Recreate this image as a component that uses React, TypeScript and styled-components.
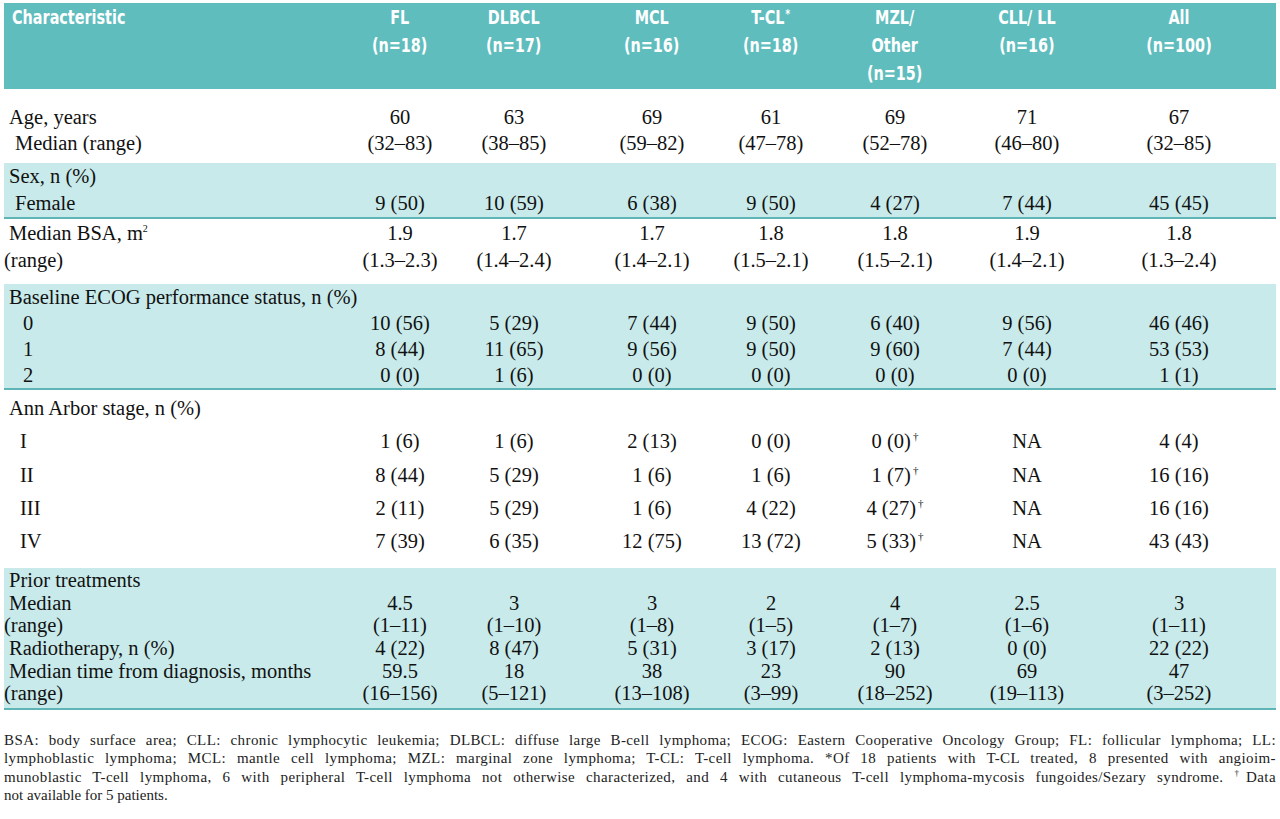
import React from 'react';
import styled, { createGlobalStyle } from 'styled-components';

// Baseline characteristics table (teal header, alternating shaded blocks)

const GlobalStyle = createGlobalStyle`
  html, body {
    margin: 0;
    padding: 0;
    background: #fff;
  }
`;

const COLS = '348px 96px 132px 144px 94px 154px 110px 1fr';

const Page = styled.div`
  width: 1272px;
  padding: 3px 4px 0;
  font-family: 'Liberation Serif', 'Times New Roman', serif;
  color: #111;
`;

const Head = styled.div`
  display: grid;
  grid-template-columns: ${COLS};
  height: 86px;
  background: #5fbdbe;
  color: #fff;
  font-family: 'Liberation Sans Narrow', 'DejaVu Sans Condensed', sans-serif;
  font-stretch: condensed;
  font-weight: bold;
  font-size: 20px;
  line-height: 28px;
`;

const HeadCell = styled.div<{ $left?: boolean }>`
  text-align: ${(p) => (p.$left ? 'left' : 'center')};
  padding-left: ${(p) => (p.$left ? '8px' : '0')};
`;

// the source face is a heavy condensed grotesque; squeeze the bold condensed sans to match
const HeadText = styled.span<{ $left?: boolean }>`
  display: inline-block;
  transform: scaleX(0.8);
  transform-origin: ${(p) => (p.$left ? 'left' : 'center')} top;
`;

const Star = styled.sup`
  font-size: 13px;
  line-height: 0;
  vertical-align: 6px;
  margin-left: 1px;
`;

const Section = styled.div<{ $shaded?: boolean; $lh: number; $pt: number; $pb: number }>`
  background: ${(p) => (p.$shaded ? '#c8eaea' : '#fff')};
  border-bottom: ${(p) => (p.$shaded ? '2px solid #5fb5b6' : 'none')};
  padding: ${(p) => p.$pt}px 0 ${(p) => p.$pb}px;
  line-height: ${(p) => p.$lh}px;
  font-size: 20.5px;
`;

const Line = styled.div`
  display: grid;
  grid-template-columns: ${COLS};
  white-space: nowrap;
`;

const Label = styled.div<{ $indent: number }>`
  padding-left: ${(p) => 5 + p.$indent}px;
`;

const Value = styled.div`
  text-align: center;
`;

const Sup = styled.sup`
  font-size: 11px;
  line-height: 0;
  vertical-align: 8px;
  margin-left: 2px;
`;

const Squared = styled.sup`
  font-size: 10px;
  line-height: 0;
  vertical-align: 8px;
`;

const Notes = styled.div`
  margin-top: 21px;
  font-size: 15px;
  line-height: 18.5px;
  color: #222;
`;

const NoteLine = styled.div<{ $last?: boolean }>`
  text-align: ${(p) => (p.$last ? 'left' : 'justify')};
  text-align-last: ${(p) => (p.$last ? 'left' : 'justify')};
  letter-spacing: ${(p) => (p.$last ? '0' : '0.4px')};
`;

const NoteSup = styled.sup`
  font-size: 9px;
  line-height: 0;
  vertical-align: 6px;
`;

type Row = { label: React.ReactNode; indent?: number; values?: string[] };
type Block = { shaded?: boolean; lh: number; pt: number; pb: number; rows: Row[] };

const blocks: Block[] = [
  {
    lh: 26,
    pt: 15,
    pb: 7,
    rows: [
      { label: 'Age, years', values: ['60', '63', '69', '61', '69', '71', '67'] },
      {
        label: 'Median (range)',
        indent: 6,
        values: ['(32–83)', '(38–85)', '(59–82)', '(47–78)', '(52–78)', '(46–80)', '(32–85)'],
      },
    ],
  },
  {
    shaded: true,
    lh: 27,
    pt: 0,
    pb: 0,
    rows: [
      { label: 'Sex, n (%)' },
      {
        label: 'Female',
        indent: 6,
        values: ['9 (50)', '10 (59)', '6 (38)', '9 (50)', '4 (27)', '7 (44)', '45 (45)'],
      },
    ],
  },
  {
    lh: 27,
    pt: 1,
    pb: 10,
    rows: [
      {
        label: (
          <>
            Median BSA, m<Squared>2</Squared>
          </>
        ),
        values: ['1.9', '1.7', '1.7', '1.8', '1.8', '1.9', '1.8'],
      },
      {
        label: '(range)',
        indent: -5,
        values: ['(1.3–2.3)', '(1.4–2.4)', '(1.4–2.1)', '(1.5–2.1)', '(1.5–2.1)', '(1.4–2.1)', '(1.3–2.4)'],
      },
    ],
  },
  {
    shaded: true,
    lh: 26,
    pt: 0,
    pb: 0,
    rows: [
      { label: 'Baseline ECOG performance status, n (%)' },
      { label: '0', indent: 14, values: ['10 (56)', '5 (29)', '7 (44)', '9 (50)', '6 (40)', '9 (56)', '46 (46)'] },
      { label: '1', indent: 14, values: ['8 (44)', '11 (65)', '9 (56)', '9 (50)', '9 (60)', '7 (44)', '53 (53)'] },
      { label: '2', indent: 14, values: ['0 (0)', '1 (6)', '0 (0)', '0 (0)', '0 (0)', '0 (0)', '1 (1)'] },
    ],
  },
  {
    lh: 33.25,
    pt: 2,
    pb: 10,
    rows: [
      { label: 'Ann Arbor stage, n (%)' },
      { label: 'I', indent: 11, values: ['1 (6)', '1 (6)', '2 (13)', '0 (0)', '0 (0)†', 'NA', '4 (4)'] },
      { label: 'II', indent: 11, values: ['8 (44)', '5 (29)', '1 (6)', '1 (6)', '1 (7)†', 'NA', '16 (16)'] },
      { label: 'III', indent: 11, values: ['2 (11)', '5 (29)', '1 (6)', '4 (22)', '4 (27)†', 'NA', '16 (16)'] },
      { label: 'IV', indent: 11, values: ['7 (39)', '6 (35)', '12 (75)', '13 (72)', '5 (33)†', 'NA', '43 (43)'] },
    ],
  },
  {
    shaded: true,
    lh: 22.6,
    pt: 1,
    pb: 3,
    rows: [
      { label: 'Prior treatments' },
      { label: 'Median', values: ['4.5', '3', '3', '2', '4', '2.5', '3'] },
      {
        label: '(range)',
        indent: -5,
        values: ['(1–11)', '(1–10)', '(1–8)', '(1–5)', '(1–7)', '(1–6)', '(1–11)'],
      },
      {
        label: 'Radiotherapy, n (%)',
        values: ['4 (22)', '8 (47)', '5 (31)', '3 (17)', '2 (13)', '0 (0)', '22 (22)'],
      },
      {
        label: 'Median time from diagnosis, months',
        values: ['59.5', '18', '38', '23', '90', '69', '47'],
      },
      {
        label: '(range)',
        indent: -5,
        values: ['(16–156)', '(5–121)', '(13–108)', '(3–99)', '(18–252)', '(19–113)', '(3–252)'],
      },
    ],
  },
];

const heads: React.ReactNode[][] = [
  ['FL', '(n=18)'],
  ['DLBCL', '(n=17)'],
  ['MCL', '(n=16)'],
  [
    <>
      T-CL<Star>*</Star>
    </>,
    '(n=18)',
  ],
  ['MZL/', 'Other', '(n=15)'],
  ['CLL/ LL', '(n=16)'],
  ['All', '(n=100)'],
];

const renderValue = (v: string) =>
  v.endsWith('†') ? (
    <>
      {v.slice(0, -1)}
      <Sup>†</Sup>
    </>
  ) : (
    v
  );

export default function App() {
  return (
    <Page>
      <GlobalStyle />
      <Head>
        <HeadCell $left>
          <HeadText $left>Characteristic</HeadText>
        </HeadCell>
        {heads.map((lines, i) => (
          <HeadCell key={i}>
            <HeadText>
              {lines.map((l, j) => (
                <React.Fragment key={j}>
                  {j > 0 && <br />}
                  {l}
                </React.Fragment>
              ))}
            </HeadText>
          </HeadCell>
        ))}
      </Head>

      {blocks.map((b, i) => (
        <Section key={i} $shaded={b.shaded} $lh={b.lh} $pt={b.pt} $pb={b.pb}>
          {b.rows.map((r, j) => (
            <Line key={j}>
              <Label $indent={r.indent ?? 0}>{r.label}</Label>
              {(r.values ?? []).map((v, k) => (
                <Value key={k}>{renderValue(v)}</Value>
              ))}
            </Line>
          ))}
        </Section>
      ))}

      <Notes>
        <NoteLine>
          BSA: body surface area; CLL: chronic lymphocytic leukemia; DLBCL: diffuse large B-cell lymphoma; ECOG:
          Eastern Cooperative Oncology Group; FL: follicular lymphoma; LL:
        </NoteLine>
        <NoteLine>
          lymphoblastic lymphoma; MCL: mantle cell lymphoma; MZL: marginal zone lymphoma; T-CL: T-cell lymphoma. *Of
          18 patients with T-CL treated, 8 presented with angioim-
        </NoteLine>
        <NoteLine>
          munoblastic T-cell lymphoma, 6 with peripheral T-cell lymphoma not otherwise characterized, and 4 with
          cutaneous T-cell lymphoma-mycosis fungoides/Sezary syndrome. <NoteSup>†</NoteSup>Data
        </NoteLine>
        <NoteLine $last>not available for 5 patients.</NoteLine>
      </Notes>
    </Page>
  );
}
